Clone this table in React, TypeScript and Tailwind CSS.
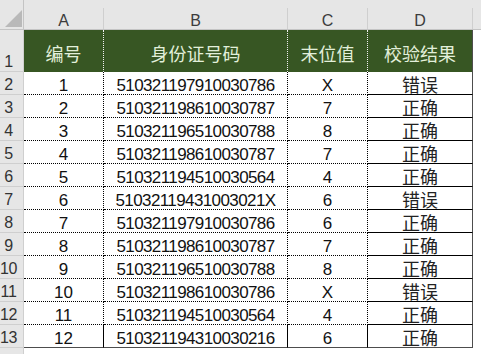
const rows: [string, string, string, string][] = [
  ['1', '510321197910030786', 'X', '错误'],
  ['2', '510321198610030787', '7', '正确'],
  ['3', '510321196510030788', '8', '正确'],
  ['4', '510321198610030787', '7', '正确'],
  ['5', '510321194510030564', '4', '正确'],
  ['6', '51032119431003021X', '6', '错误'],
  ['7', '510321197910030786', '6', '正确'],
  ['8', '510321198610030787', '7', '正确'],
  ['9', '510321196510030788', '8', '正确'],
  ['10', '510321198610030786', 'X', '错误'],
  ['11', '510321194510030564', '4', '正确'],
  ['12', '510321194310030216', '6', '正确'],
];

const sans = "font-['Liberation_Sans','Noto_Sans_CJK_SC',sans-serif]";

function ColHead({ label, last }: { label?: string; last?: boolean }) {
  return (
    <div className="flex flex-col bg-[#e6e6e6] border-b border-[#c4c4c4]">
      <div className="h-[8px]" />
      <div
        className={`flex-1 flex items-end justify-center text-[16px] leading-[16px] text-[#3c3c3c] ${sans} ${
          last ? '' : 'border-r border-[#cfcfcf]'
        }`}
      >
        {label}
      </div>
    </div>
  );
}

function RowHead({ n }: { n?: string }) {
  return (
    <div
      className={`flex items-end justify-center pr-[6px] pb-[1px] bg-[#e6e6e6] border-r border-b border-[#cfcfcf] text-[16px] leading-[16px] tracking-[-0.3px] text-[#333] whitespace-nowrap ${sans}`}
    >
      {n}
    </div>
  );
}

export default function App() {
  return (
    <div className="w-[481px] h-[354px] overflow-hidden bg-white">
      <div className="grid grid-cols-[24px_80px_184px_80px_105px_8px] grid-rows-[30px_42px_repeat(12,23px)_6px]">
        {/* column letters */}
        <div className="relative bg-[#e6e6e6] border-r border-b border-[#c4c4c4]">
          <svg className="absolute left-[5px] top-[10px]" width="17" height="17" viewBox="0 0 17 17">
            <polygon points="17,0 17,17 0,17" fill="#b9b9b9" />
          </svg>
        </div>
        <ColHead label="A" />
        <ColHead label="B" />
        <ColHead label="C" />
        <ColHead label="D" />
        <ColHead last />

        {/* header row */}
        <RowHead n="1" />
        {['编号', '身份证号码', '末位值', '校验结果'].map((h, i) => (
          <div
            key={h}
            className={`flex items-center justify-center pt-[4px] bg-[#375623] text-[#e2efda] text-[18px] leading-[18px] font-['Noto_Sans_CJK_SC',sans-serif] ${
              i < 3 ? 'border-r border-dotted border-[#f2f2f2]' : 'border-r border-[#4d4d4d]'
            }`}
          >
            {h}
          </div>
        ))}
        <div />

        {/* data rows */}
        {rows.map((r, ri) => {
          const last = ri === rows.length - 1;
          const bottom = last ? 'border-b border-solid border-b-[#4d4d4d]' : 'border-b border-dotted border-b-black';
          return (
            <div key={ri} className="contents">
              <RowHead n={String(ri + 2)} />
              <div className={`flex items-end justify-center text-[17px] leading-[16px] text-[#111] border-r border-dotted border-r-black ${bottom} ${sans}`}>
                {r[0]}
              </div>
              <div className={`flex items-end justify-center text-[17px] leading-[16px] tracking-[-0.6px] text-[#111] border-r border-dotted border-r-black ${bottom} ${sans}`}>
                {r[1]}
              </div>
              <div className={`flex items-end justify-center text-[17px] leading-[16px] text-[#111] border-r border-dotted border-r-black ${bottom} ${sans}`}>
                {r[2]}
              </div>
              <div className={`flex items-end justify-center text-[18px] leading-[16px] text-[#222] border-r border-solid border-r-[#4d4d4d] ${bottom} ${sans}`}>
                {r[3]}
              </div>
              <div />
            </div>
          );
        })}

        {/* partial row 14 */}
        <div className="bg-[#e6e6e6] border-r border-[#cfcfcf]" />
        <div />
        <div />
        <div />
        <div />
        <div />
      </div>
    </div>
  );
}
